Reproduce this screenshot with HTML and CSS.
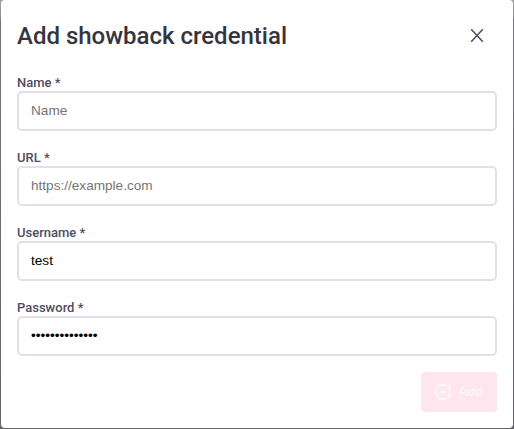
FILE: index.html
```html
<!DOCTYPE html>
<html lang="en">
<head>
<meta charset="utf-8">
<title>Add showback credential</title>
<link rel="stylesheet" href="styles.css">
</head>
<body>
<form class="dialog">
  <header class="dialog-header">
    <h1 class="dialog-title">Add showback credential</h1>
    <button class="close" type="button">
      <svg width="14" height="14" viewBox="0 0 14 14"><path d="M1.2 .3 12.8 12.7M12.8 .3 1.2 12.7"/></svg>
    </button>
  </header>
  <div class="fields">
    <label class="field"><span class="field-label">Name *</span><input class="field-input" type="text" placeholder="Name"></label>
    <label class="field"><span class="field-label">URL *</span><input class="field-input" type="text" placeholder="https://example.com"></label>
    <label class="field"><span class="field-label">Username *</span><input class="field-input" type="text" value="test" spellcheck="false"></label>
    <label class="field"><span class="field-label">Password *</span><input class="field-input" type="password" value="12345678901234"></label>
  </div>
  <footer class="actions">
    <button class="add" type="button" disabled>
      <svg width="16" height="16" viewBox="0 0 16 16"><circle cx="8" cy="8" r="7.3"/><path d="M8 4.5v7M4.5 8h7"/></svg>
      <span>Add</span>
    </button>
  </footer>
</form>
</body>
</html>
```

FILE: styles.css
```css
* {
  box-sizing: border-box;
}

body {
  margin: 0;
  height: 429px;
  padding: 0 1px 1px;
  overflow: hidden;
  background: linear-gradient(#a0a0a1 0, #929294 18px, #74737a 20px, #66656c 100%);
}

.dialog {
  height: 428px;
  padding: 16px;
  border-radius: 4px;
  background: #fff;
}

.dialog-header {
  display: flex;
  align-items: center;
  justify-content: space-between;
  height: 40px;
}

.dialog-title {
  margin: 0;
  font: 500 24px/40px Roboto, sans-serif;
  color: #36343e;
}

.close {
  display: flex;
  align-items: center;
  justify-content: center;
  width: 40px;
  height: 40px;
  padding: 0;
  border: 0;
  background: none;
}

.close svg {
  overflow: visible;
  fill: none;
  stroke: #4c4860;
  stroke-width: 1.5;
}

.fields {
  display: flex;
  flex-direction: column;
  gap: 16px;
  margin-top: 16px;
}

.field {
  display: flex;
  flex-direction: column;
  height: 59px;
}

.field-label {
  height: 19px;
  font: 500 13px/21px Roboto, sans-serif;
  color: #504c64;
}

.field-input {
  width: 100%;
  height: 40px;
  padding: 0 12px 2px;
  border: 2px solid #e1e0e7;
  border-radius: 5px;
  background: #fff;
  color: #000;
  font: 13.6px "Liberation Sans", sans-serif;
}

.field-input::placeholder {
  color: #757575;
}

.actions {
  display: flex;
  justify-content: flex-end;
  margin-top: 16px;
}

.add {
  display: flex;
  align-items: center;
  gap: 7.5px;
  width: 76px;
  height: 40px;
  padding: 0 14px;
  border: 0;
  border-radius: 4px;
  background: #ffe5ed;
  color: #fffafc;
  font: 13.6px "Liberation Sans", sans-serif;
}

.add span {
  padding-bottom: 1px;
}

.add svg {
  flex: none;
  fill: none;
  stroke: #fff8fa;
  stroke-width: 1.6;
}
```
